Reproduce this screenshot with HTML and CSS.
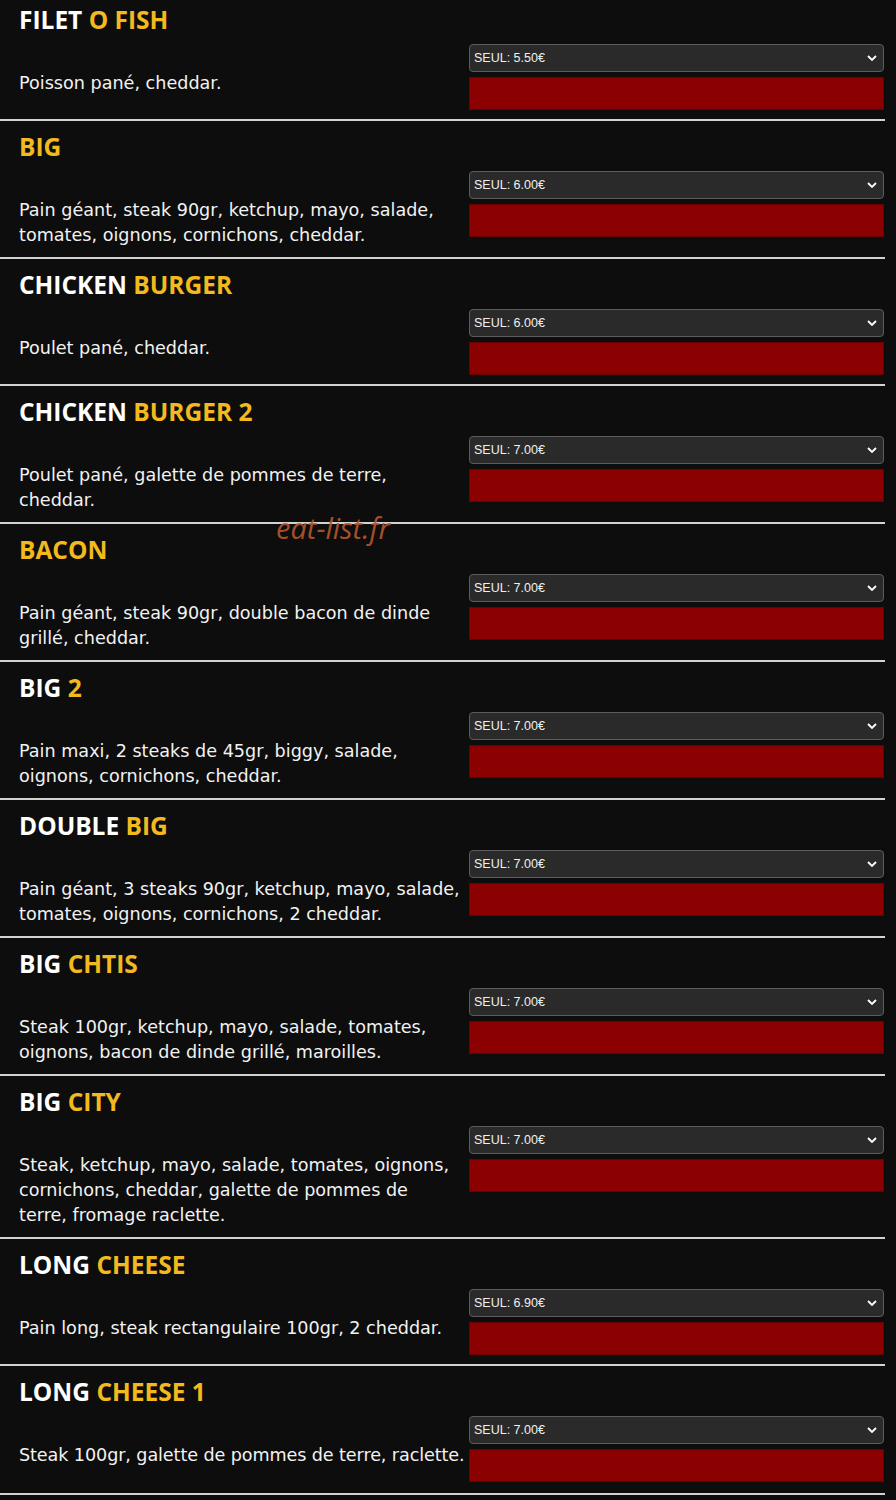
FILE: index.html
```html
<!DOCTYPE html>
<html lang="fr">
<head>
<meta charset="utf-8">
<title>Menu</title>
<link rel="stylesheet" href="styles.css">
</head>
<body>
<div class="menu">
  <div class="item">
    <div class="info">
      <h2 class="title">FILET <span class="hl">O FISH</span></h2>
      <p class="desc">Poisson pané, cheddar.</p>
    </div>
    <div class="order">
      <div class="select"><span>SEUL: 5.50€</span><svg class="chev" viewBox="0 0 10 6" width="10" height="6"><path d="M1 1l4 4 4-4" fill="none" stroke="#fff" stroke-width="1.8"/></svg></div>
      <div class="btn"></div>
    </div>
  </div>
  <div class="item">
    <div class="info">
      <h2 class="title"><span class="hl">BIG</span></h2>
      <p class="desc">Pain géant, steak 90gr, ketchup, mayo, salade, tomates, oignons, cornichons, cheddar.</p>
    </div>
    <div class="order">
      <div class="select"><span>SEUL: 6.00€</span><svg class="chev" viewBox="0 0 10 6" width="10" height="6"><path d="M1 1l4 4 4-4" fill="none" stroke="#fff" stroke-width="1.8"/></svg></div>
      <div class="btn"></div>
    </div>
  </div>
  <div class="item">
    <div class="info">
      <h2 class="title">CHICKEN <span class="hl">BURGER</span></h2>
      <p class="desc">Poulet pané, cheddar.</p>
    </div>
    <div class="order">
      <div class="select"><span>SEUL: 6.00€</span><svg class="chev" viewBox="0 0 10 6" width="10" height="6"><path d="M1 1l4 4 4-4" fill="none" stroke="#fff" stroke-width="1.8"/></svg></div>
      <div class="btn"></div>
    </div>
  </div>
  <div class="item">
    <div class="info">
      <h2 class="title">CHICKEN <span class="hl">BURGER 2</span></h2>
      <p class="desc">Poulet pané, galette de pommes de terre, cheddar.</p>
    </div>
    <div class="order">
      <div class="select"><span>SEUL: 7.00€</span><svg class="chev" viewBox="0 0 10 6" width="10" height="6"><path d="M1 1l4 4 4-4" fill="none" stroke="#fff" stroke-width="1.8"/></svg></div>
      <div class="btn"></div>
    </div>
  </div>
  <div class="item">
    <div class="info">
      <h2 class="title"><span class="hl">BACON</span></h2>
      <p class="desc">Pain géant, steak 90gr, double bacon de dinde grillé, cheddar.</p>
    </div>
    <div class="order">
      <div class="select"><span>SEUL: 7.00€</span><svg class="chev" viewBox="0 0 10 6" width="10" height="6"><path d="M1 1l4 4 4-4" fill="none" stroke="#fff" stroke-width="1.8"/></svg></div>
      <div class="btn"></div>
    </div>
  </div>
  <div class="item">
    <div class="info">
      <h2 class="title">BIG <span class="hl">2</span></h2>
      <p class="desc">Pain maxi, 2 steaks de 45gr, biggy, salade, oignons, cornichons, cheddar.</p>
    </div>
    <div class="order">
      <div class="select"><span>SEUL: 7.00€</span><svg class="chev" viewBox="0 0 10 6" width="10" height="6"><path d="M1 1l4 4 4-4" fill="none" stroke="#fff" stroke-width="1.8"/></svg></div>
      <div class="btn"></div>
    </div>
  </div>
  <div class="item">
    <div class="info">
      <h2 class="title">DOUBLE <span class="hl">BIG</span></h2>
      <p class="desc">Pain géant, 3 steaks 90gr, ketchup, mayo, salade, tomates, oignons, cornichons, 2 cheddar.</p>
    </div>
    <div class="order">
      <div class="select"><span>SEUL: 7.00€</span><svg class="chev" viewBox="0 0 10 6" width="10" height="6"><path d="M1 1l4 4 4-4" fill="none" stroke="#fff" stroke-width="1.8"/></svg></div>
      <div class="btn"></div>
    </div>
  </div>
  <div class="item">
    <div class="info">
      <h2 class="title">BIG <span class="hl">CHTIS</span></h2>
      <p class="desc">Steak 100gr, ketchup, mayo, salade, tomates, oignons, bacon de dinde grillé, maroilles.</p>
    </div>
    <div class="order">
      <div class="select"><span>SEUL: 7.00€</span><svg class="chev" viewBox="0 0 10 6" width="10" height="6"><path d="M1 1l4 4 4-4" fill="none" stroke="#fff" stroke-width="1.8"/></svg></div>
      <div class="btn"></div>
    </div>
  </div>
  <div class="item">
    <div class="info">
      <h2 class="title">BIG <span class="hl">CITY</span></h2>
      <p class="desc">Steak, ketchup, mayo, salade, tomates, oignons, cornichons, cheddar, galette de pommes de terre, fromage raclette.</p>
    </div>
    <div class="order">
      <div class="select"><span>SEUL: 7.00€</span><svg class="chev" viewBox="0 0 10 6" width="10" height="6"><path d="M1 1l4 4 4-4" fill="none" stroke="#fff" stroke-width="1.8"/></svg></div>
      <div class="btn"></div>
    </div>
  </div>
  <div class="item">
    <div class="info">
      <h2 class="title">LONG <span class="hl">CHEESE</span></h2>
      <p class="desc">Pain long, steak rectangulaire 100gr, 2 cheddar.</p>
    </div>
    <div class="order">
      <div class="select"><span>SEUL: 6.90€</span><svg class="chev" viewBox="0 0 10 6" width="10" height="6"><path d="M1 1l4 4 4-4" fill="none" stroke="#fff" stroke-width="1.8"/></svg></div>
      <div class="btn"></div>
    </div>
  </div>
  <div class="item item-last">
    <div class="info">
      <h2 class="title">LONG <span class="hl">CHEESE 1</span></h2>
      <p class="desc desc-tight">Steak 100gr, galette de pommes de terre, raclette.</p>
    </div>
    <div class="order">
      <div class="select"><span>SEUL: 7.00€</span><svg class="chev" viewBox="0 0 10 6" width="10" height="6"><path d="M1 1l4 4 4-4" fill="none" stroke="#fff" stroke-width="1.8"/></svg></div>
      <div class="btn"></div>
    </div>
  </div>
</div>
<div class="watermark">eat-list.fr</div>
</body>
</html>
```
FILE: styles.css
```css
html, body {
  margin: 0;
  padding: 0;
  background: #0d0d0d;
}
body {
  position: relative;
  font-family: "Open Sans", "DejaVu Sans", sans-serif;
  color: #f4f4f4;
}
.menu {
  margin-top: -6px;
  width: 885px;
}
.item {
  display: flex;
  align-items: flex-start;
  padding: 10px 1px 9px 19px;
  border-bottom: 2px solid #d2d2d2;
}
.item-last {
  padding-bottom: 11px;
}
.info {
  width: 441px;
  margin-right: 9px;
  flex: none;
}
.title {
  margin: 0;
  font-size: 24.5px;
  line-height: 32px;
  font-weight: 700;
  color: #ffffff;
}
.hl {
  color: #f3ba1e;
}
.desc {
  margin: 35px 0 0;
  font-family: "DejaVu Sans", "Open Sans", sans-serif;
  font-size: 17.6px;
  line-height: 25px;
  color: #f2f2f2;
}
.desc-tight {
  white-space: nowrap;
  letter-spacing: -0.1px;
}
.order {
  width: 415px;
  flex: none;
  margin-top: 40px;
  display: flex;
  flex-direction: column;
  gap: 5px;
}
.select {
  box-sizing: border-box;
  height: 28px;
  background: #2a2a2a;
  border: 1px solid #5c5c5c;
  border-radius: 4px;
  display: flex;
  align-items: center;
  justify-content: space-between;
  padding: 0 6px 0 4px;
  font-family: "Liberation Sans", Arial, sans-serif;
  font-size: 12.5px;
  color: #f0f0f0;
}
.chev {
  display: block;
}
.btn {
  box-sizing: border-box;
  height: 33px;
  background: #8b0000;
  border: 1px solid #6a0000;
}
.watermark {
  position: absolute;
  left: 276px;
  top: 508px;
  font-family: "Open Sans", sans-serif;
  font-style: italic;
  font-size: 29px;
  color: #b4582e;
  opacity: 0.9;
  pointer-events: none;
}
```
